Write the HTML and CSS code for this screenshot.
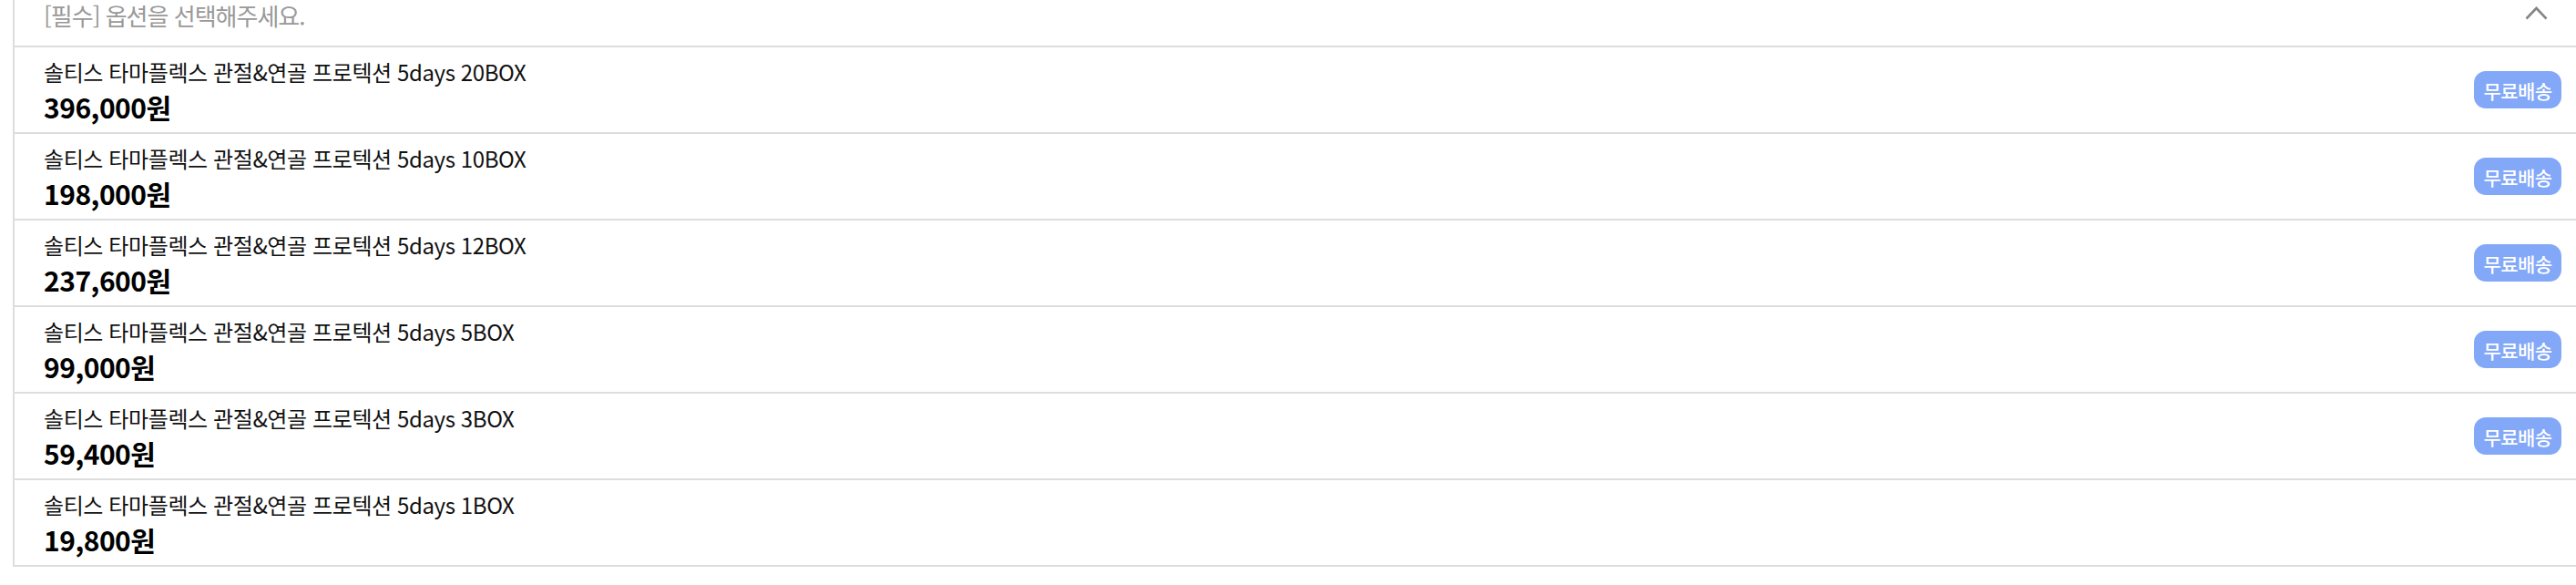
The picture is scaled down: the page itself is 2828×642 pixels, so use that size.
FILE: index.html
```html
<!DOCTYPE html>
<html lang="ko">
<head>
<meta charset="utf-8">
<link rel="stylesheet" href="styles.css">
</head>
<body>
<div class="select">
  <div class="select-head">
    <span class="placeholder">[필수] 옵션을 선택해주세요.</span>
    <svg class="chevron" width="25" height="16" viewBox="0 0 25 16"><polyline points="1.5,14.5 12.5,3 23.5,14.5" fill="none" stroke="#858585" stroke-width="2.6"/></svg>
  </div>
  <ul class="options">
    <li class="option">
      <div class="info"><div class="name">솔티스 타마플렉스 관절&amp;연골 프로텍션 5days 20BOX</div><div class="price">396,000원</div></div>
      <span class="badge">무료배송</span>
    </li>
    <li class="option">
      <div class="info"><div class="name">솔티스 타마플렉스 관절&amp;연골 프로텍션 5days 10BOX</div><div class="price">198,000원</div></div>
      <span class="badge">무료배송</span>
    </li>
    <li class="option">
      <div class="info"><div class="name">솔티스 타마플렉스 관절&amp;연골 프로텍션 5days 12BOX</div><div class="price">237,600원</div></div>
      <span class="badge">무료배송</span>
    </li>
    <li class="option">
      <div class="info"><div class="name">솔티스 타마플렉스 관절&amp;연골 프로텍션 5days 5BOX</div><div class="price">99,000원</div></div>
      <span class="badge">무료배송</span>
    </li>
    <li class="option">
      <div class="info"><div class="name">솔티스 타마플렉스 관절&amp;연골 프로텍션 5days 3BOX</div><div class="price">59,400원</div></div>
      <span class="badge">무료배송</span>
    </li>
    <li class="option">
      <div class="info"><div class="name">솔티스 타마플렉스 관절&amp;연골 프로텍션 5days 1BOX</div><div class="price">19,800원</div></div>
    </li>
  </ul>
</div>
</body>
</html>
```
FILE: styles.css
```css
html, body {
  margin: 0;
  padding: 0;
  background: #fff;
}
body {
  font-family: "Noto Sans CJK KR", "Noto Sans", sans-serif;
  color: #111;
  overflow: hidden;
}
.select {
  margin-left: 14px;
  border-left: 2px solid #dddddd;
  border-bottom: 2px solid #dddddd;
}
.select-head {
  height: 52px;
  border-bottom: 2px solid #dddddd;
  display: flex;
  align-items: flex-start;
  justify-content: space-between;
  padding: 0 31px 0 32px;
  box-sizing: border-box;
}
.placeholder {
  font-size: 26px;
  line-height: 34px;
  color: #999999;
  letter-spacing: -1px;
}
.chevron {
  margin-top: 6px;
}
.options {
  list-style: none;
  margin: 0;
  padding: 0;
}
.option {
  display: flex;
  align-items: center;
  justify-content: space-between;
  height: 95px;
  box-sizing: border-box;
  padding: 0 16px 0 32px;
  border-bottom: 2px solid #dddddd;
}
.option:last-child {
  border-bottom: none;
  height: 93px;
}
.info {
  display: flex;
  flex-direction: column;
}
.name {
  font-size: 24px;
  line-height: 36px;
  letter-spacing: -0.4px;
  color: #111;
}
.price {
  font-size: 30px;
  line-height: 40px;
  font-weight: 700;
  letter-spacing: -0.5px;
  color: #000;
}
.badge {
  display: inline-flex;
  align-items: center;
  justify-content: center;
  width: 96px;
  height: 41px;
  border-radius: 13px;
  background: #83a8f7;
  color: #fff;
  font-size: 21px;
  font-weight: 500;
  letter-spacing: -0.6px;
}
```
